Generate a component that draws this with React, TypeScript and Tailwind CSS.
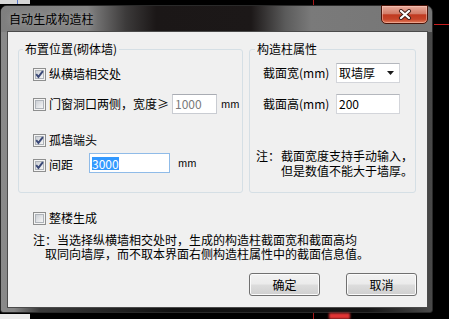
import React from 'react';

const Check: React.FC<{ checked?: boolean }> = ({ checked }) => (
  <svg width="13" height="13" viewBox="0 0 13 13" className="shrink-0">
    <defs>
      <linearGradient id="cbFill" x1="0" y1="0" x2="1" y2="1">
        <stop offset="0" stopColor="#c9cdd3" />
        <stop offset="1" stopColor="#f8f8f8" />
      </linearGradient>
    </defs>
    <rect x="0.5" y="0.5" width="12" height="12" fill="#f4f4f4" stroke="#8e8f8f" />
    <rect x="2.5" y="2.5" width="8" height="8" fill="url(#cbFill)" stroke="#aeb3b9" />
    {checked && (
      <path d="M3.2 6.2 L5.4 8.9 L9.9 3.1" fill="none" stroke="#3a4877" strokeWidth="1.9" />
    )}
  </svg>
);

const CheckRow: React.FC<{ checked?: boolean; label: string }> = ({ checked, label }) => (
  <div className="flex items-center gap-[3px]">
    <Check checked={checked} />
    <span>{label}</span>
  </div>
);

const WinButton: React.FC<{ label: string }> = ({ label }) => (
  <div className="w-[71px] h-[23px] rounded-[3px] border border-[#707070] bg-[linear-gradient(180deg,#f2f2f2_0%,#ebebeb_48%,#dddddd_52%,#cfcfcf_100%)] shadow-[inset_0_0_0_1px_#fbfbfb] flex items-center justify-center">
    {label}
  </div>
);

export default function App() {
  return (
    <div className="relative w-[449px] h-[319px] overflow-hidden bg-black pt-[5px] font-['Noto_Sans_CJK_SC','Noto_Sans',sans-serif] text-[12px] leading-[16px] text-black">
      {/* bits of the desktop behind the dialog */}
      <div className="absolute left-0 top-0 w-[30px] h-[4px] bg-[#d6d6d6]" />
      <div className="absolute left-[17px] top-0 w-[1px] h-[4px] bg-[#5a78c8]" />
      <div className="absolute left-[313px] top-0 w-[1px] h-[5px] bg-[#a81818]" />
      <div className="absolute left-[434px] top-[24px] w-[15px] h-[1px] bg-[#c81e1e]" />
      <div className="absolute left-0 top-[314px] w-[30px] h-[5px] bg-[#ececec]" />
      <div className="absolute left-[313px] top-[313px] w-[1px] h-[6px] bg-[#a81818]" />
      <div className="absolute left-[329px] top-[313px] w-[21px] h-[6px] bg-[#e03434] blur-[1px]" />

      <div className="w-[433px] h-[308px] rounded-t-[7px] rounded-b-[3px] border border-[#2a2a2a] bg-[linear-gradient(90deg,#8a8a8a_0%,#878787_3%,#3a3a3a_9%,#111111_40%,#151515_85%,#4a4a4a_100%)] flex flex-col">
        {/* title bar */}
        <div className="h-[26px] flex items-center rounded-t-[6px] bg-[linear-gradient(90deg,#7f7f7f_0%,#838383_20%,#3c3a3a_29%,#1b1717_36%,#1c1818_58%,#5b5b5b_66%,#7a7a7a_72%,#767676_100%)]">
          <span className="pl-[8px] tracking-[0.1px] [text-shadow:0_0_6px_rgba(255,255,255,0.35)]">自动生成构造柱</span>
          <div className="ml-auto mr-[4px] -mt-[1px] self-start w-[47px] h-[19px] rounded-b-[5px] border border-[#4a1409] bg-[linear-gradient(180deg,#e9ab9b_0%,#d37c68_45%,#c03a20_52%,#c6452a_78%,#e27e5c_100%)] shadow-[inset_0_0_0_1px_rgba(255,215,205,0.45)] flex items-center justify-center">
            <svg width="14" height="11" viewBox="0 0 14 11">
              <path d="M3 2 L11 9 M11 2 L3 9" stroke="#3a1a14" strokeWidth="4" strokeLinecap="round" />
              <path d="M3 2 L11 9 M11 2 L3 9" stroke="#ffffff" strokeWidth="2.3" strokeLinecap="round" />
            </svg>
          </div>
        </div>

        {/* client area */}
        <div className="ml-[7px] w-[419px] h-[275px] bg-[#f0f0f0] shadow-[0_0_0_1px_#4b4b4b] flex flex-col">
          <div className="flex pt-[9px] pl-[10px] gap-[6px]">
            <fieldset className="w-[225px] h-[152px] border border-[#d5dfe5] rounded-[3px]">
              <legend className="ml-[4px] px-[2px] leading-[16px]">布置位置(砌体墙)</legend>
              <div className="pt-[7px] pl-[14px] flex flex-col">
                <div className="h-[20px] flex items-center">
                  <CheckRow checked label="纵横墙相交处" />
                </div>
                <div className="mt-[10px] h-[20px] flex items-center">
                  <CheckRow label="门窗洞口两侧，宽度≥" />
                  <div className="ml-[3px] w-[45px] h-[20px] border border-[#c9ccd2] border-t-[#a9acb3] bg-white pl-[2px] flex items-center text-[#7a7a7a]">
                    1000
                  </div>
                  <span className="ml-[4px] text-[10px]">mm</span>
                </div>
                <div className="mt-[16px] h-[20px] flex items-center">
                  <CheckRow checked label="孤墙端头" />
                </div>
                <div className="mt-[3px] h-[20px] flex items-center">
                  <div className="mt-[4px]">
                    <CheckRow checked label="间距" />
                  </div>
                  <div className="ml-[16px] w-[81px] h-[20px] border border-[#8fbbe8] bg-white pl-[2px] flex items-center">
                    <span className="bg-[#3399ff] text-white leading-[13px]">3000</span>
                  </div>
                  <span className="ml-[8px] text-[10px]">mm</span>
                </div>
              </div>
            </fieldset>

            <fieldset className="w-[167px] h-[152px] border border-[#d5dfe5] rounded-[3px]">
              <legend className="ml-[5px] px-[2px] leading-[16px]">构造柱属性</legend>
              <div className="pt-[6px] pl-[13px] flex flex-col">
                <div className="h-[20px] flex items-center">
                  <span className="w-[73px]">截面宽(mm)</span>
                  <div className="w-[64px] h-[20px] border border-[#d3d5da] border-t-[#b4b7bd] bg-white pl-[2px] pr-[5px] flex items-center justify-between">
                    <span>取墙厚</span>
                    <svg width="7" height="4" viewBox="0 0 7 4">
                      <path d="M0 0 H7 L3.5 4 Z" fill="#1a1a1a" />
                    </svg>
                  </div>
                </div>
                <div className="mt-[11px] h-[20px] flex items-center">
                  <span className="w-[73px]">截面高(mm)</span>
                  <div className="w-[64px] h-[20px] border border-[#d3d5da] border-t-[#b4b7bd] bg-white pl-[2px] flex items-center">
                    200
                  </div>
                </div>
              </div>
              <div className="mt-[34px] pl-[6px] flex">
                <div className="w-[25px] h-[15px] leading-[15px]">注：</div>
                <div className="flex flex-col">
                  <div className="h-[15px] leading-[15px]">截面宽度支持手动输入，</div>
                  <div className="h-[15px] leading-[15px]">但是数值不能大于墙厚。</div>
                </div>
              </div>
            </fieldset>
          </div>

          <div className="mt-[15px] h-[20px] pl-[25px] flex items-center">
            <CheckRow label="整楼生成" />
          </div>
          <div className="mt-[5px] pl-[25px] flex flex-col">
            <div className="h-[14px] leading-[14px]">注：当选择纵横墙相交处时，生成的构造柱截面宽和截面高均</div>
            <div className="h-[14px] leading-[14px] pl-[12px]">取同向墙厚，而不取本界面右侧构造柱属性中的截面信息值。</div>
          </div>
          <div className="mt-[12px] pr-[10px] flex justify-end gap-[26px]">
            <WinButton label="确定" />
            <WinButton label="取消" />
          </div>
        </div>
      </div>
    </div>
  );
}
